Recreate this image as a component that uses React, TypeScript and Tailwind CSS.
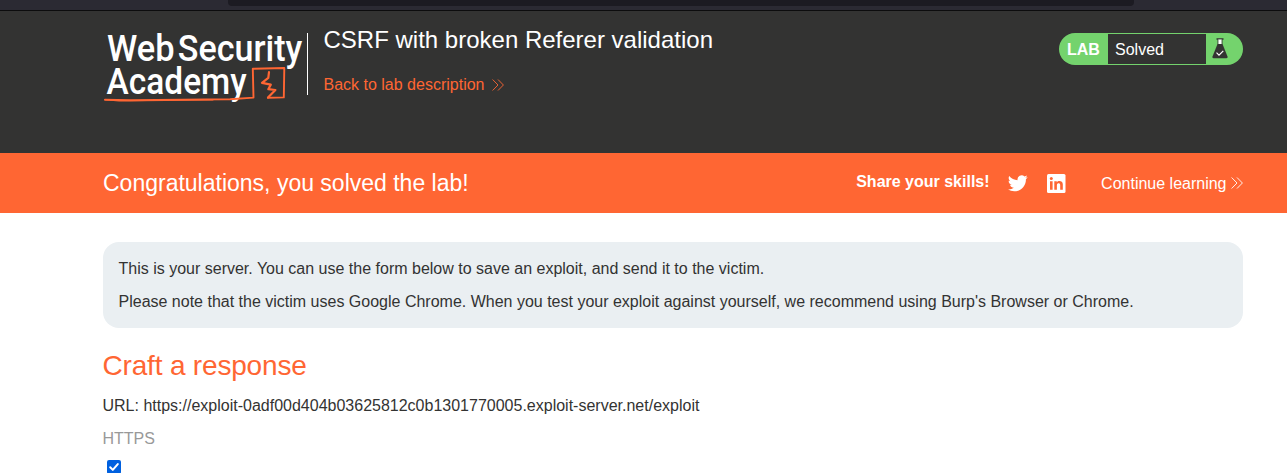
import React from "react";

function Chevrons({ className }: { className: string }) {
  return (
    <svg className={className} width="12" height="12" viewBox="0 0 12 12" fill="none" stroke="currentColor" strokeWidth="0.9">
      <path d="M0.6 0.5 6 6 0.6 11.5M6 0.5 11.4 6 6 11.5" />
    </svg>
  );
}

function Logo() {
  return (
    <svg className="shrink-0 overflow-visible" width="203" height="76" viewBox="0 0 203 76">
      <g fill="#fff" fontFamily="Roboto, sans-serif" fontWeight="500" fontSize="36.5">
        <text x="4" y="30.3" textLength="67.5" lengthAdjust="spacingAndGlyphs">Web</text>
        <text x="74.8" y="30.3" textLength="124.5" lengthAdjust="spacingAndGlyphs">Security</text>
        <text x="3.6" y="63" textLength="140" lengthAdjust="spacingAndGlyphs">Academy</text>
      </g>
      <g fill="none" stroke="#ff6633" strokeLinejoin="round" strokeLinecap="round">
        <path strokeWidth="1.9" d="M2 68.7 27 69.3 80 68.6 127 68.2 150.5 66.6 149.8 37.8 181.3 37 180.8 66.4 165 66.8" />
        <path strokeWidth="2.2" d="M166 41.2 165.3 46.8 159 51.8 167.8 53.6 165.3 58.2 172.4 59 165 66.6" />
        <path strokeWidth="1.3" d="M2 68.7 16 69.8 110 68.8" />
      </g>
    </svg>
  );
}

function LabStatus() {
  return (
    <div className="mt-[22px] flex h-8 w-[184px] overflow-hidden rounded-full bg-[#74d36d] text-white">
      <div className="w-[49px] pl-2 text-[16px] font-bold leading-[34px]">LAB</div>
      <div className="my-px w-[98px] bg-[#333332] pl-[7px] text-[16px] leading-[31px]">Solved</div>
      <svg className="ml-[5px] mt-[5px]" width="18" height="22" viewBox="0 0 18 22">
        <path d="M5.5 1h7" stroke="#333332" strokeWidth="1.3" />
        <path d="M7.2 1.5h3.6v5H7.2z" fill="#fff" />
        <path d="M6.9 1.5v5M11.1 1.5v5" stroke="#333332" strokeWidth=".8" />
        <path d="M6.5 6h5l5 12.4q.6 1.9-1.4 1.9H2.9q-2 0-1.4-1.9z" fill="#333332" />
        <path d="m5.5 14.6 2.5 2.6 4.3-4.4" fill="none" stroke="#fff" strokeWidth="1.2" />
      </svg>
    </div>
  );
}

export default function App() {
  return (
    <div className="h-[473px] overflow-hidden bg-white font-['Liberation_Sans',Arial,sans-serif] text-[16px] text-[#333332]">
      <div className="h-[11px] border-b border-[#0c0c0d] bg-[#2b2a33] pl-[228px]">
        <div className="h-[6px] w-[906px] rounded-b-[4px] bg-[#1c1b22]" />
      </div>

      <header className="flex h-[142px] bg-[#333332] pl-[103px] pr-11">
        <div className="pt-[20px]">
          <Logo />
        </div>
        <div className="ml-px mt-[22px] h-[62px] w-px bg-white" />
        <div className="ml-[15.5px] flex-1 pt-[15px]">
          <h1 className="text-[24px] leading-[28px] text-white">CSRF with broken Referer validation</h1>
          <a className="mt-[21px] flex items-center leading-[20px] text-[#ff6633]">
            Back to lab description
            <Chevrons className="ml-[8px] -mt-px" />
          </a>
        </div>
        <LabStatus />
      </header>

      <section className="flex h-[60px] items-center bg-[#ff6633] pl-[103px] pr-11 text-white">
        <h2 className="flex-1 text-[23px] leading-[28px]">Congratulations, you solved the lab!</h2>
        <span className="-mt-[3px] mr-[18.5px] font-bold">Share your skills!</span>
        <svg className="mr-[19px]" width="20" height="20" viewBox="0 0 24 24" fill="currentColor">
          <path d="M23.6 4.9c-.9.4-1.8.6-2.8.8 1-.6 1.8-1.6 2.1-2.7-.9.6-2 1-3.1 1.2a4.9 4.9 0 0 0-8.3 4.4C7.5 8.4 3.9 6.5 1.5 3.5c-1.3 2.2-.7 5 1.5 6.5-.8 0-1.5-.2-2.2-.6v.1c0 2.3 1.6 4.3 3.9 4.8-.7.2-1.5.2-2.2.1.6 2 2.4 3.4 4.5 3.4A9.8 9.8 0 0 1 0 19.8a13.9 13.9 0 0 0 7.5 2.2c9.1 0 14-7.5 14-14v-.6c.8-.7 1.5-1.5 2.1-2.5z" />
        </svg>
        <svg className="mr-[35px]" width="19" height="19" viewBox="0 0 19 19">
          <rect width="18.5" height="19" rx="1.5" fill="#fff" />
          <g fill="#ff6633">
            <circle cx="4.3" cy="4.5" r="1.5" />
            <path d="M3 7.2h2.6v8.6H3zM7.3 7.2h2.5v1.2c1-1.9 6-2.1 6 1.9v5.5h-2.6v-4.7c0-2.6-3.3-2.4-3.3 0v4.7H7.3z" />
          </g>
        </svg>
        <a className="flex items-center pt-px">
          Continue learning
          <Chevrons className="-mt-px ml-[4.5px]" />
        </a>
      </section>

      <main className="pl-[103px] pr-11 pt-[29px]">
        <div className="h-[86px] rounded-[16px] bg-[#eaeff2] pl-[15.5px] pr-4 pt-[15px] leading-[23px]">
          <p>This is your server. You can use the form below to save an exploit, and send it to the victim.</p>
          <p className="mt-[10px]">Please note that the victim uses Google Chrome. When you test your exploit against yourself, we recommend using Burp&#39;s Browser or Chrome.</p>
        </div>
        <h2 className="-ml-[0.5px] mt-[21px] text-[28px] leading-[34px] tracking-[-0.18px] text-[#ff6633]">Craft a response</h2>
        <p className="-ml-[0.5px] mt-[11px] leading-[23px]">URL: https://exploit-0adf00d404b03625812c0b1301770005.exploit-server.net/exploit</p>
        <p className="-ml-[0.5px] mt-[10px] leading-[23px] text-[#999]">HTTPS</p>
        <div className="ml-1 mt-[10px] h-[14px] w-[14px] rounded-[2px] bg-[#0060df]">
          <svg width="14" height="14" viewBox="0 0 14 14" fill="none" stroke="#fff" strokeWidth="2" strokeLinecap="round" strokeLinejoin="round">
            <path d="m3.2 7.2 2.6 2.7 5-5.8" />
          </svg>
        </div>
      </main>
    </div>
  );
}
